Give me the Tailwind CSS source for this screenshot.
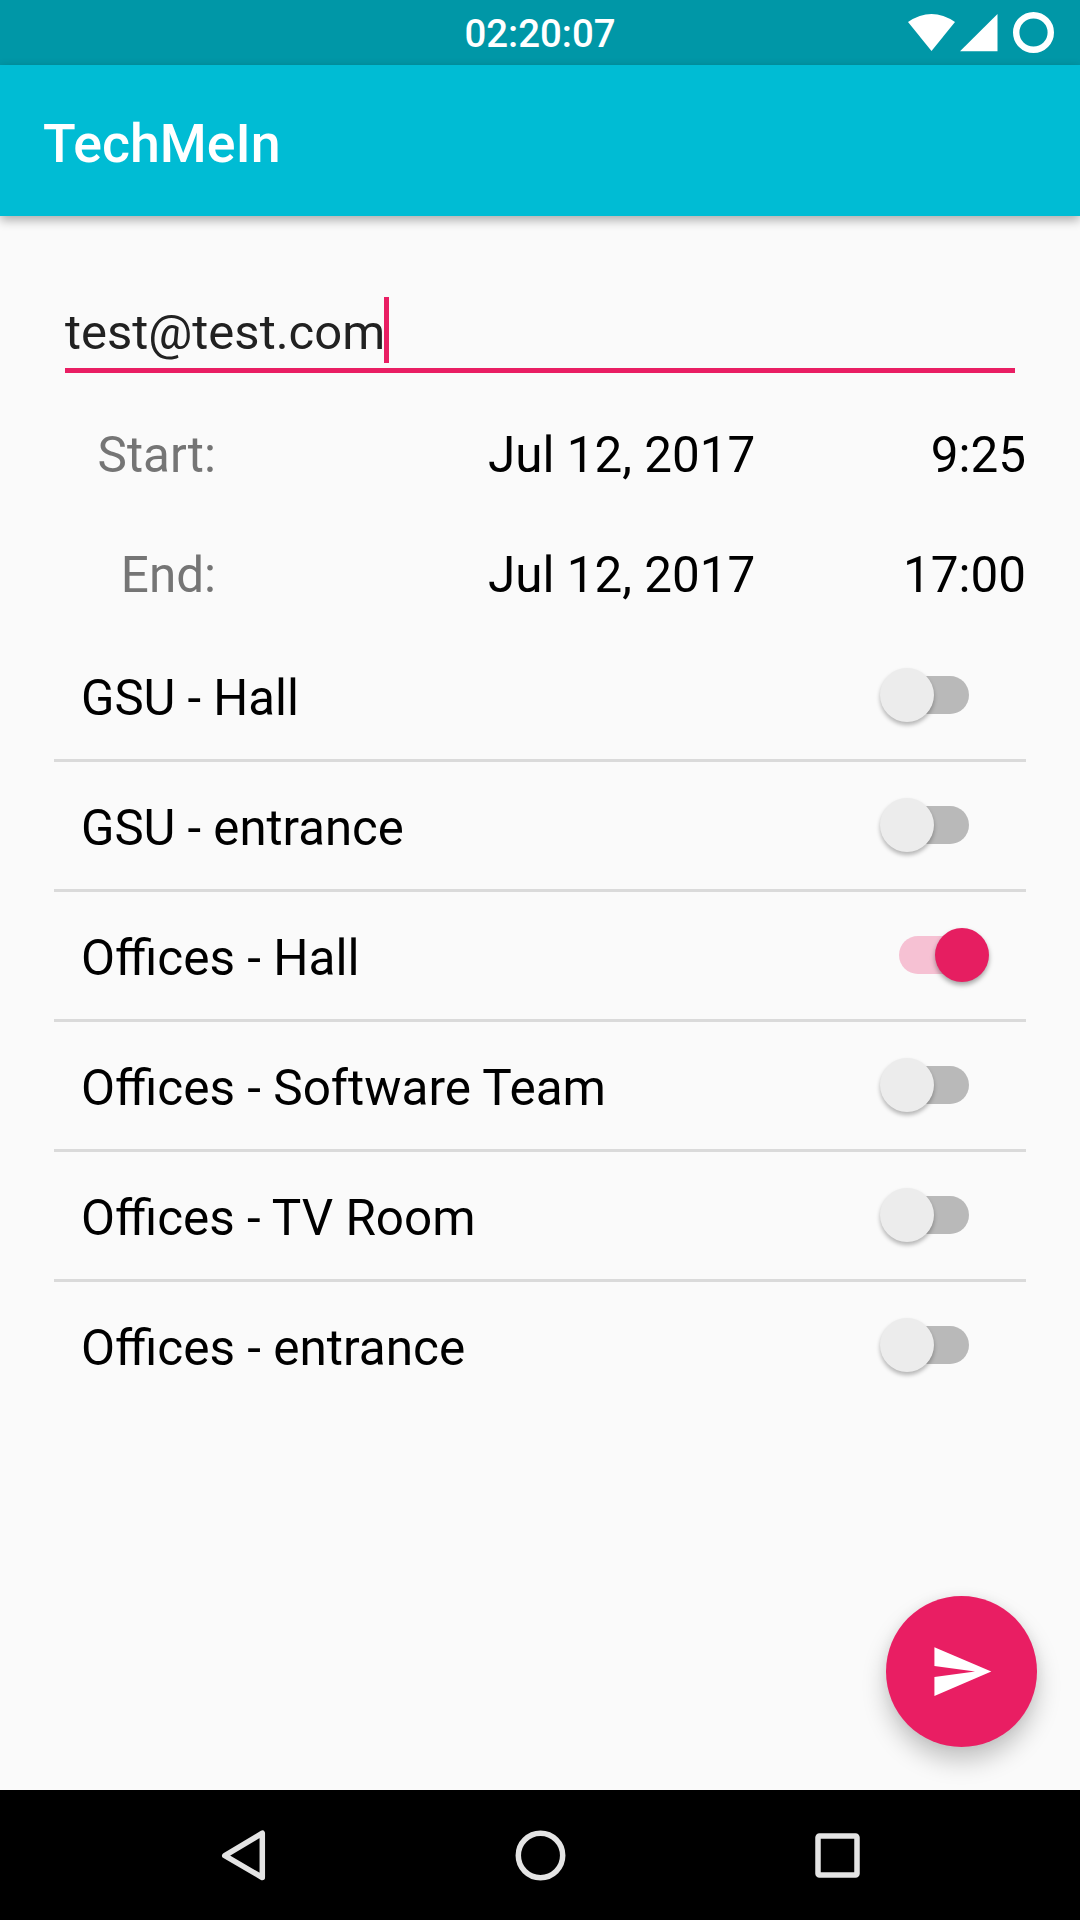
<!DOCTYPE html>
<html lang="en">
<head>
<meta charset="utf-8">
<title>TechMeIn</title>
<script src="https://cdn.jsdelivr.net/npm/@tailwindcss/browser@4"></script>
</head>
<body class="relative flex h-[1920px] w-[1080px] flex-col overflow-hidden bg-[#fafafa] font-['Roboto',sans-serif] text-[49.4px] leading-none text-black">
  <header class="grid h-[65px] shrink-0 grid-cols-3 items-center bg-[#0097a7] text-white">
    <span class="col-start-2 pt-[3px] text-center text-[38.4px] font-medium">02:20:07</span>
    <svg class="h-[65px] w-[200px] justify-self-end" viewBox="0 0 200 65" fill="#fff">
      <path d="M28 22Q51.500 6 75 22L51.500 51Z"/>
      <path d="M80 51.300L117.500 14V51.300Z"/>
      <circle cx="153.500" cy="32.500" r="17.300" fill="none" stroke="#fff" stroke-width="6.400"/>
    </svg>
  </header>
  <div class="z-10 flex h-[151px] shrink-0 items-center bg-[#00bcd4] pt-1.5 pl-[43px] text-[53.7px] font-medium text-white shadow-[0_4px_10px_rgba(0,0,0,0.32)]">
    <h1>TechMeIn</h1>
  </div>

  <main class="flex flex-1 flex-col">
    <div class="ml-[65px] flex h-[157px] w-[950px] items-end border-b-5 border-[#e91e63] pb-[5px] text-[49px] text-[#212121]">
      <span class="flex h-[66px] items-center pt-1">test@test.com</span>
      <span class="-ml-px h-[66px] w-[5px] bg-[#e91e63]"></span>
    </div>

    <div class="mt-[21px] mr-[54px] grid grid-cols-[216px_272px_1fr_auto] text-black">
      <span class="flex h-[120px] items-center justify-end pt-1 text-[#757575]">Start:</span>
      <span class="col-start-3 flex h-[120px] items-center pt-1">Jul 12, 2017</span>
      <span class="flex h-[120px] items-center justify-end pt-1">9:25</span>
      <span class="flex h-[120px] items-center justify-end pt-1 text-[#757575]">End:</span>
      <span class="col-start-3 flex h-[120px] items-center pt-1">Jul 12, 2017</span>
      <span class="flex h-[120px] items-center justify-end pt-1">17:00</span>
    </div>

    <ul class="-mt-0.5 mr-[54px] ml-[54px] divide-y-3 divide-[#dadada]">
      <li class="flex h-[130px] items-center justify-between pr-[37px] pl-[27px]"><span class="pt-1.5 text-[49.1px]">GSU - Hall</span>
        <span class="relative mr-5 mb-px h-[38px] w-[70px] rounded-full bg-[#b9b9b9]"><i class="absolute -top-2 -left-[19.5px] size-[54px] rounded-full bg-[#ececec] shadow-[0_3px_4px_rgba(0,0,0,0.28)]"></i></span></li>
      <li class="flex h-[130px] items-center justify-between pr-[37px] pl-[27px]"><span class="pt-1.5 text-[49.1px]">GSU - entrance</span>
        <span class="relative mr-5 mb-px h-[38px] w-[70px] rounded-full bg-[#b9b9b9]"><i class="absolute -top-2 -left-[19.5px] size-[54px] rounded-full bg-[#ececec] shadow-[0_3px_4px_rgba(0,0,0,0.28)]"></i></span></li>
      <li class="flex h-[130px] items-center justify-between pr-[37px] pl-[27px]"><span class="pt-1.5 text-[49.5px]">Offices - Hall</span>
        <span class="relative mr-5 mb-px h-[38px] w-[70px] rounded-full bg-[#f6c1d3]"><i class="absolute -top-2 -right-[19.5px] size-[54px] rounded-full bg-[#e61e61] shadow-[0_3px_5px_rgba(0,0,0,0.35)]"></i></span></li>
      <li class="flex h-[130px] items-center justify-between pr-[37px] pl-[27px]"><span class="pt-1.5 text-[49.5px]">Offices - Software Team</span>
        <span class="relative mr-5 mb-px h-[38px] w-[70px] rounded-full bg-[#b9b9b9]"><i class="absolute -top-2 -left-[19.5px] size-[54px] rounded-full bg-[#ececec] shadow-[0_3px_4px_rgba(0,0,0,0.28)]"></i></span></li>
      <li class="flex h-[130px] items-center justify-between pr-[37px] pl-[27px]"><span class="pt-1.5">Offices - TV Room</span>
        <span class="relative mr-5 mb-px h-[38px] w-[70px] rounded-full bg-[#b9b9b9]"><i class="absolute -top-2 -left-[19.5px] size-[54px] rounded-full bg-[#ececec] shadow-[0_3px_4px_rgba(0,0,0,0.28)]"></i></span></li>
      <li class="flex h-[127px] items-center justify-between pr-[37px] pl-[27px]"><span class="pt-1.5 text-[49.5px]">Offices - entrance</span>
        <span class="relative mr-5 mb-px h-[38px] w-[70px] rounded-full bg-[#b9b9b9]"><i class="absolute -top-2 -left-[19.5px] size-[54px] rounded-full bg-[#ececec] shadow-[0_3px_4px_rgba(0,0,0,0.28)]"></i></span></li>
    </ul>
  </main>

  <button aria-label="Send" class="absolute right-[43px] bottom-[173px] flex size-[151px] items-center justify-center rounded-full bg-[#e91e63] shadow-[0_14px_24px_rgba(0,0,0,0.22),0_0_12px_rgba(0,0,0,0.06)]">
    <svg class="size-[65px]" viewBox="0 0 24 24" fill="#fff"><path d="M2 21L23 12 2 3V10L17 12 2 14Z"/></svg>
  </button>

  <nav class="flex h-[130px] shrink-0 bg-black">
    <svg class="h-[130px] w-[1080px]" viewBox="0 0 1080 130" fill="none" stroke="#e4e4e4" stroke-width="5.500" stroke-linejoin="round">
      <path d="M262.300 43.200V87.500L224.800 65.700Z"/>
      <circle cx="540.500" cy="65.500" r="22.200"/>
      <rect x="818" y="46" width="39" height="39" rx="1.500"/>
    </svg>
  </nav>
</body>
</html>
